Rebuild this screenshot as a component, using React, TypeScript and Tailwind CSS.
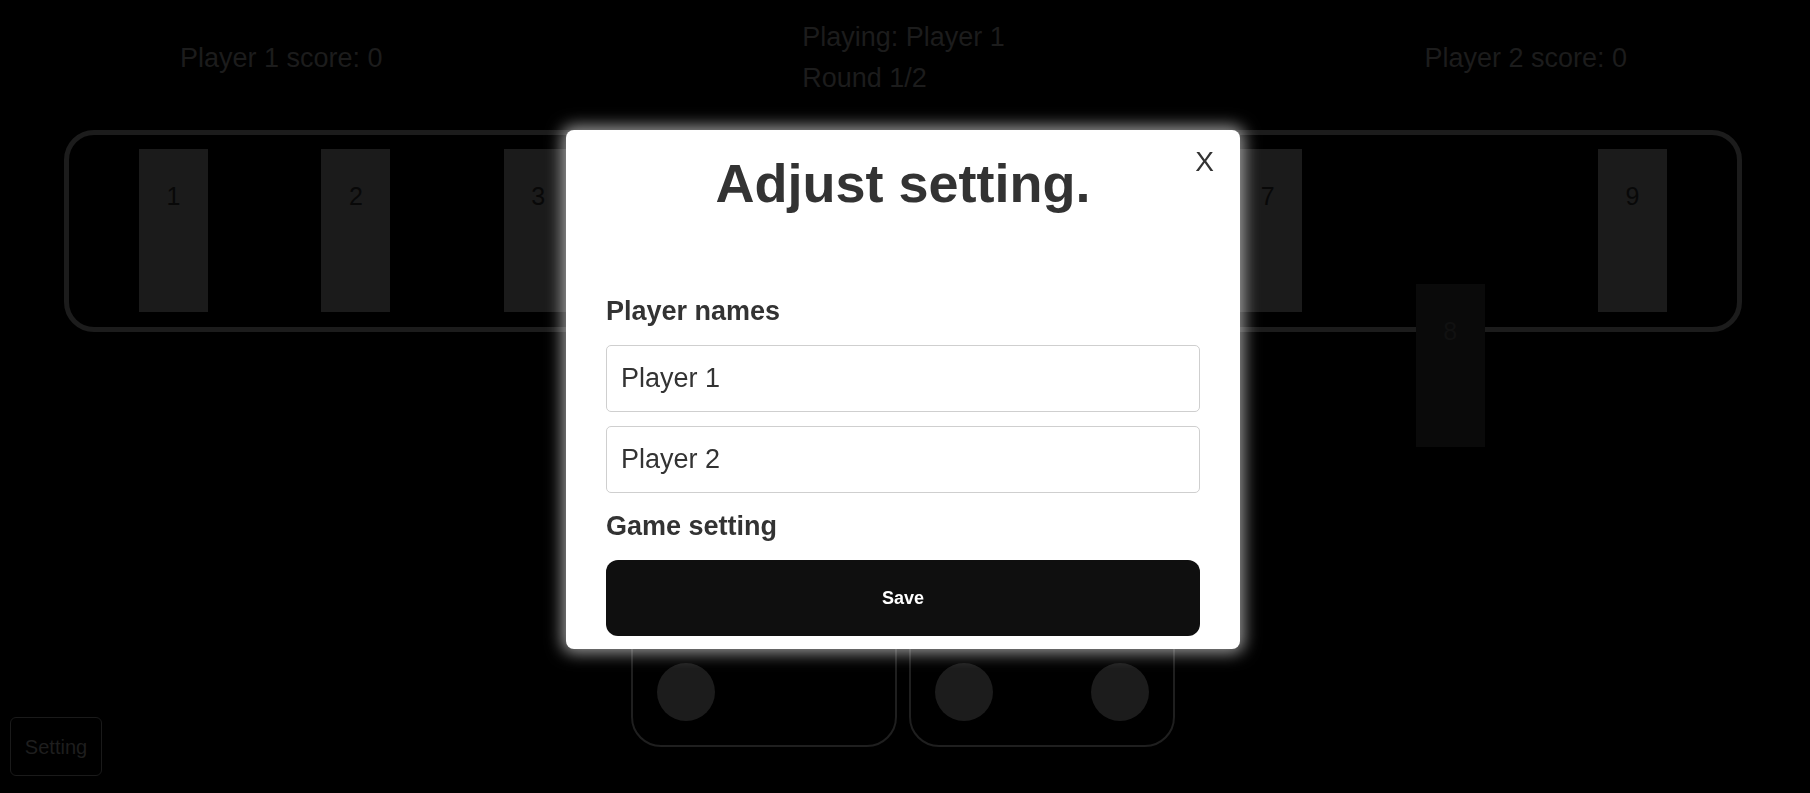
import React from 'react';

const cards = [1, 2, 3, 4, 5, 6, 7, 8, 9];

const Card = ({ value, picked }: { value: number; picked?: boolean }) => (
  <div
    className={
      picked
        ? 'w-[69px] h-[163px] bg-[#0a0a0a] text-[#111111] text-center pt-[29px] text-[25px] translate-y-[135px]'
        : 'w-[69px] h-[163px] bg-[#1b1b1b] text-[#080808] text-center pt-[29px] text-[25px]'
    }
  >
    {value}
  </div>
);

const Slot = ({ circles }: { circles: number }) => (
  <div className="w-[266px] h-[147px] border-2 border-[#1f1f1f] rounded-[30px] flex items-end justify-between px-[24px] pb-[24px]">
    <div className="w-[58px] h-[58px] rounded-full bg-[#1c1c1c]" />
    {circles > 1 ? <div className="w-[58px] h-[58px] rounded-full bg-[#1c1c1c]" /> : <div className="w-[58px]" />}
  </div>
);

const SettingsModal = () => (
  <div className="fixed inset-0">
    <div className="absolute left-[566px] top-[130px] w-[674px] bg-white rounded-[8px] shadow-[0_0_16px_4px_rgba(255,255,255,0.6)] px-[40px] pt-[22px] pb-[13px] text-[#333333]">
      <button className="absolute right-[26px] top-[16px] text-[28px] leading-[32px] text-[#333333]">X</button>
      <h1 className="text-center text-[54px] leading-[62px] font-bold">Adjust setting.</h1>

      <div className="mt-[82px] text-[27px] leading-[31px] font-bold">Player names</div>
      <div className="mt-[18px] flex flex-col gap-[14px]">
        <input
          defaultValue="Player 1"
          className="h-[67px] w-full border border-[#cfcfcf] rounded-[5px] px-[14px] text-[27px] text-[#333333] outline-none"
        />
        <input
          defaultValue="Player 2"
          className="h-[67px] w-full border border-[#cfcfcf] rounded-[5px] px-[14px] text-[27px] text-[#333333] outline-none"
        />
      </div>

      <div className="mt-[18px] text-[27px] leading-[31px] font-bold">Game setting</div>
      <button className="mt-[18px] h-[76px] w-full bg-[#0f0f0f] rounded-[12px] text-white font-bold text-[18px]">
        Save
      </button>
    </div>
  </div>
);

export default function App() {
  return (
    <div className="relative w-[1810px] h-[793px] overflow-hidden bg-black font-['Liberation_Sans',Arial,sans-serif] text-[#1c1c1c]">
      {/* Cabeçalho */}
      <div className="mt-[17px] h-[82px] flex items-center justify-between pl-[180px] pr-[183px] text-[27px]">
        <div className="leading-[41px]">Player 1 score: 0</div>
        <div className="leading-[41px]">
          <div>Playing: Player 1</div>
          <div>Round 1/2</div>
        </div>
        <div className="leading-[41px]">Player 2 score: 0</div>
      </div>

      {/* Tabuleiro */}
      <div className="mt-[31px] ml-[64px] w-[1678px] h-[202px] border-[5px] border-[#1c1c1c] rounded-[30px] flex justify-between px-[70px] pt-[14px]">
        {cards.map((c) => (
          <Card key={c} value={c} picked={c === 8} />
        ))}
      </div>

      <div className="mt-[268px] flex justify-center gap-[12px] pr-[4px]">
        <Slot circles={1} />
        <Slot circles={2} />
      </div>

      <button className="absolute left-[10px] top-[717px] w-[92px] h-[59px] border border-[#1a1a1a] rounded-[6px] text-[20px] text-[#1e1e1e]">
        Setting
      </button>

      {/* Modal de configuração */}
      <SettingsModal />
    </div>
  );
}
